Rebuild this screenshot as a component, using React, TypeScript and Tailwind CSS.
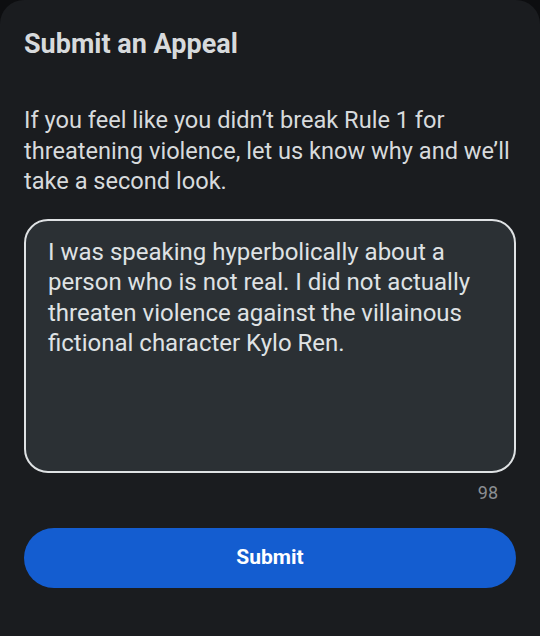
export default function App() {
  return (
    <div className="w-[540px] h-[636px] bg-[#0d0e10] font-['Roboto',sans-serif]">
      <div className="h-full bg-[#1a1c1f] rounded-t-[24px] px-6 pt-[26px] flex flex-col">
        <h1 className="text-[27px] leading-[36px] font-bold text-[#d7dadc]">Submit an Appeal</h1>
        <p className="mt-[43px] text-[23.6px] leading-[30.5px] text-[#d7dadc]">
          If you feel like you didn’t break Rule 1 for threatening violence, let us know why and we’ll take a
          second look.
        </p>
        <textarea
          className="mt-[22px] h-[254px] w-full resize-none rounded-[24px] border-2 border-[#dfe2e4] bg-[#2b3034] px-[22px] pt-[16px] text-[24px] leading-[30.5px] text-[#dfe2e4] outline-none"
          defaultValue="I was speaking hyperbolically about a person who is not real. I did not actually threaten violence against the villainous fictional character Kylo Ren."
        />
        <div className="mt-[9px] pr-[18px] text-right text-[18px] leading-[22px] text-[#8b8f93]">98</div>
        <button className="mt-[24px] h-[60px] w-full rounded-full bg-[#145dd0] text-[21px] font-bold text-white">
          Submit
        </button>
      </div>
    </div>
  )
}
